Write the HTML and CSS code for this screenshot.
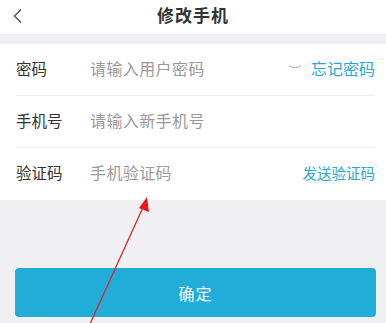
FILE: index.html
```html
<!DOCTYPE html>
<html lang="zh-CN">
<head>
  <meta charset="UTF-8">
  <meta name="viewport" content="width=device-width, initial-scale=1.0">
  <title>修改手机</title>
  <link rel="stylesheet" href="styles.css">
</head>
<body>

<div class="page">
  <!-- 顶部标题栏 -->
  <div class="header">
    <span class="back">
      <svg width="12" height="16" viewBox="0 0 12 16"><path d="M9 1.5 L2.5 8 L9 14.5" fill="none" stroke="#555" stroke-width="1.4"/></svg>
    </span>
    <h1>修改手机</h1>
  </div>

  <div class="band"></div>

  <!-- 表单 -->
  <div class="form">
    <div class="row">
      <span class="label">密码</span>
      <span class="placeholder">请输入用户密码</span>
      <span class="eye">
        <svg width="14" height="6" viewBox="0 0 14 6"><path d="M1 1.5 Q7 6 13 1.5" fill="none" stroke="#aaa" stroke-width="1"/></svg>
      </span>
      <span class="link">忘记密码</span>
    </div>
    <div class="row">
      <span class="label">手机号</span>
      <span class="placeholder">请输入新手机号</span>
    </div>
    <div class="row">
      <span class="label">验证码</span>
      <span class="placeholder">手机验证码</span>
      <span class="link small">发送验证码</span>
    </div>
  </div>

  <div class="footer">
    <button class="button">确定</button>
  </div>

  <!-- 红色箭头标注 -->
  <svg class="arrow" width="386" height="323" viewBox="0 0 386 323">
    <line x1="90" y1="324" x2="145" y2="203" stroke="#e0242c" stroke-width="1.3"/>
    <polygon points="147,197 149,212 139,208" fill="#e8161e"/>
  </svg>
</div>

</body>
</html>
```

FILE: styles.css
```css
/* 页面基础 */
body {
  margin: 0;
  font-family: "Noto Sans CJK SC", "Noto Sans", sans-serif;
  background-color: #f0f0f2;
}
.page {
  position: relative;
  width: 386px;
  height: 323px;
  overflow: hidden;
  background-color: #f0f0f2;
}
/* 标题栏 */
.header {
  height: 34px;
  background-color: #ffffff;
  display: flex;
  align-items: center;
  justify-content: center;
  position: relative;
}
.header h1 {
  margin: 0;
  font-size: 17px;
  font-weight: 700;
  color: #333333;
  letter-spacing: 1px;
  margin-top: -5px;
}
.back {
  position: absolute;
  left: 12px;
  top: 5px;
}
.band {
  height: 10px;
  background-color: #f0f0f2;
}
/* 表单区域 */
.form {
  background-color: #ffffff;
  padding: 0 11px 0 16px;
}
.row {
  height: 51px;
  display: flex;
  align-items: center;
  border-bottom: 1px solid #ececec;
}
.row:last-child {
  border-bottom: none;
  height: 52px;
}
.label {
  width: 74px;
  font-size: 15.5px;
  color: #333333;
  margin-top: -4px;
}
.placeholder {
  flex: 1;
  font-size: 16px;
  color: #999999;
  letter-spacing: 0.4px;
  margin-top: -4px;
}
.eye {
  margin-right: 9px;
  margin-top: -5px;
  display: flex;
}
.link {
  font-size: 16px;
  color: #2ba6d1;
  margin-top: -4px;
}
.link.small {
  font-size: 14.5px;
}
/* 底部按钮 */
.footer {
  padding: 68px 10px 0 15px;
}
.button {
  width: 100%;
  height: 49px;
  border: none;
  border-radius: 4px;
  background-color: #22acd8;
  color: #ffffff;
  font-family: inherit;
  font-size: 16px;
  letter-spacing: 1px;
}
/* 标注箭头 */
.arrow {
  position: absolute;
  left: 0;
  top: 0;
}
```
